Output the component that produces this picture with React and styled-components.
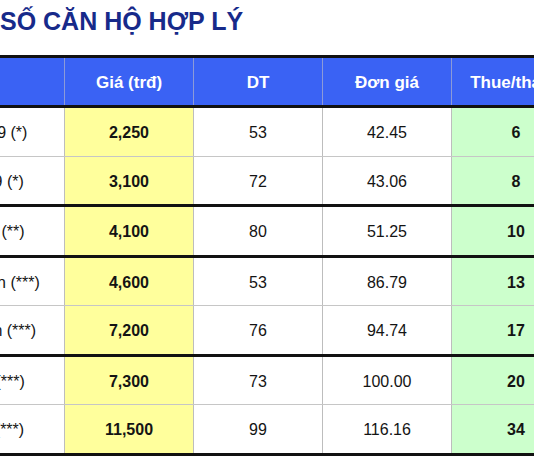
import React from 'react';
import styled, { createGlobalStyle } from 'styled-components';

const GlobalStyle = createGlobalStyle`
  html, body {
    margin: 0;
    padding: 0;
    background: #ffffff;
    overflow: hidden;
  }
  body {
    font-family: 'Liberation Sans', Arial, sans-serif;
  }
`;

const Page = styled.div`
  width: 534px;
  height: 462px;
  overflow: hidden;
`;

const Title = styled.h1`
  margin: 0;
  padding-top: 7px;
  font-size: 25px;
  line-height: 29px;
  font-weight: 700;
  color: #172a8a;
  white-space: nowrap;
`;

const Table = styled.div`
  display: flex;
  flex-direction: column;
  width: 720px;
  margin: 19px 0 0 -139px;
  border-top: 3px solid #111111;
`;

const COLUMNS = '204px repeat(4, 129px)';

const HeaderRow = styled.div`
  display: grid;
  grid-template-columns: ${COLUMNS};
  height: 47px;
  background: #3a62f4;
  border-bottom: 3px solid #111111;
`;

const HeaderCell = styled.div`
  display: flex;
  align-items: center;
  justify-content: center;
  padding-top: 3px;
  box-sizing: border-box;
  border-right: 1px solid #8c9ad8;
  color: #ffffff;
  font-size: 17px;
  font-weight: 700;
  white-space: nowrap;
`;

const BodyRow = styled.div`
  display: grid;
  grid-template-columns: ${COLUMNS};
  height: 47.5px;
  border-bottom: ${(props) => (props.$groupEnd ? '3px solid #111111' : '1px solid #c6c6c6')};
`;

const tones = {
  plain: '#ffffff',
  price: '#ffff9c',
  rent: '#ccffcc',
};

const Cell = styled.div`
  display: flex;
  align-items: center;
  justify-content: center;
  padding-top: 3px;
  box-sizing: border-box;
  border-right: 1px solid #bdbdbd;
  background: ${(props) => tones[props.$tone || 'plain']};
  color: #141414;
  font-size: 16px;
  font-weight: ${(props) => (props.$bold ? 700 : 400)};
  white-space: nowrap;
`;

const rows = [
  { name: 'Căn hộ Quận 9 (*)', price: '2,250', area: 53, unit: '42.45', rent: 6 },
  { name: 'Nhà ở Quận 9 (*)', price: '3,100', area: 72, unit: '43.06', rent: 8, end: true },
  { name: 'Căn hộ ở Q.7 (**)', price: '4,100', area: 80, unit: '51.25', rent: 10, end: true },
  { name: 'Căn hộ Bình Tân (***)', price: '4,600', area: 53, unit: '86.79', rent: 13 },
  { name: 'Nhà ở Bình Tân (***)', price: '7,200', area: 76, unit: '94.74', rent: 17, end: true },
  { name: 'Căn hộ Q.10 (***)', price: '7,300', area: 73, unit: '100.00', rent: 20 },
  { name: 'Căn hộ Q.11 (***)', price: '11,500', area: 99, unit: '116.16', rent: 34, end: true },
];

const App = () => {
  return (
    <Page>
      <GlobalStyle />
      <Title>SỐ CĂN HỘ HỢP LÝ</Title>
      <Table>
        <HeaderRow>
          <HeaderCell>Căn hộ</HeaderCell>
          <HeaderCell>Giá (trđ)</HeaderCell>
          <HeaderCell>DT</HeaderCell>
          <HeaderCell>Đơn giá</HeaderCell>
          <HeaderCell>Thue/tháng</HeaderCell>
        </HeaderRow>
        {rows.map((row) => (
          <BodyRow key={row.name} $groupEnd={row.end}>
            <Cell>{row.name}</Cell>
            <Cell $tone="price" $bold>
              {row.price}
            </Cell>
            <Cell>{row.area}</Cell>
            <Cell>{row.unit}</Cell>
            <Cell $tone="rent" $bold>
              {row.rent}
            </Cell>
          </BodyRow>
        ))}
      </Table>
    </Page>
  );
};

export default App;
